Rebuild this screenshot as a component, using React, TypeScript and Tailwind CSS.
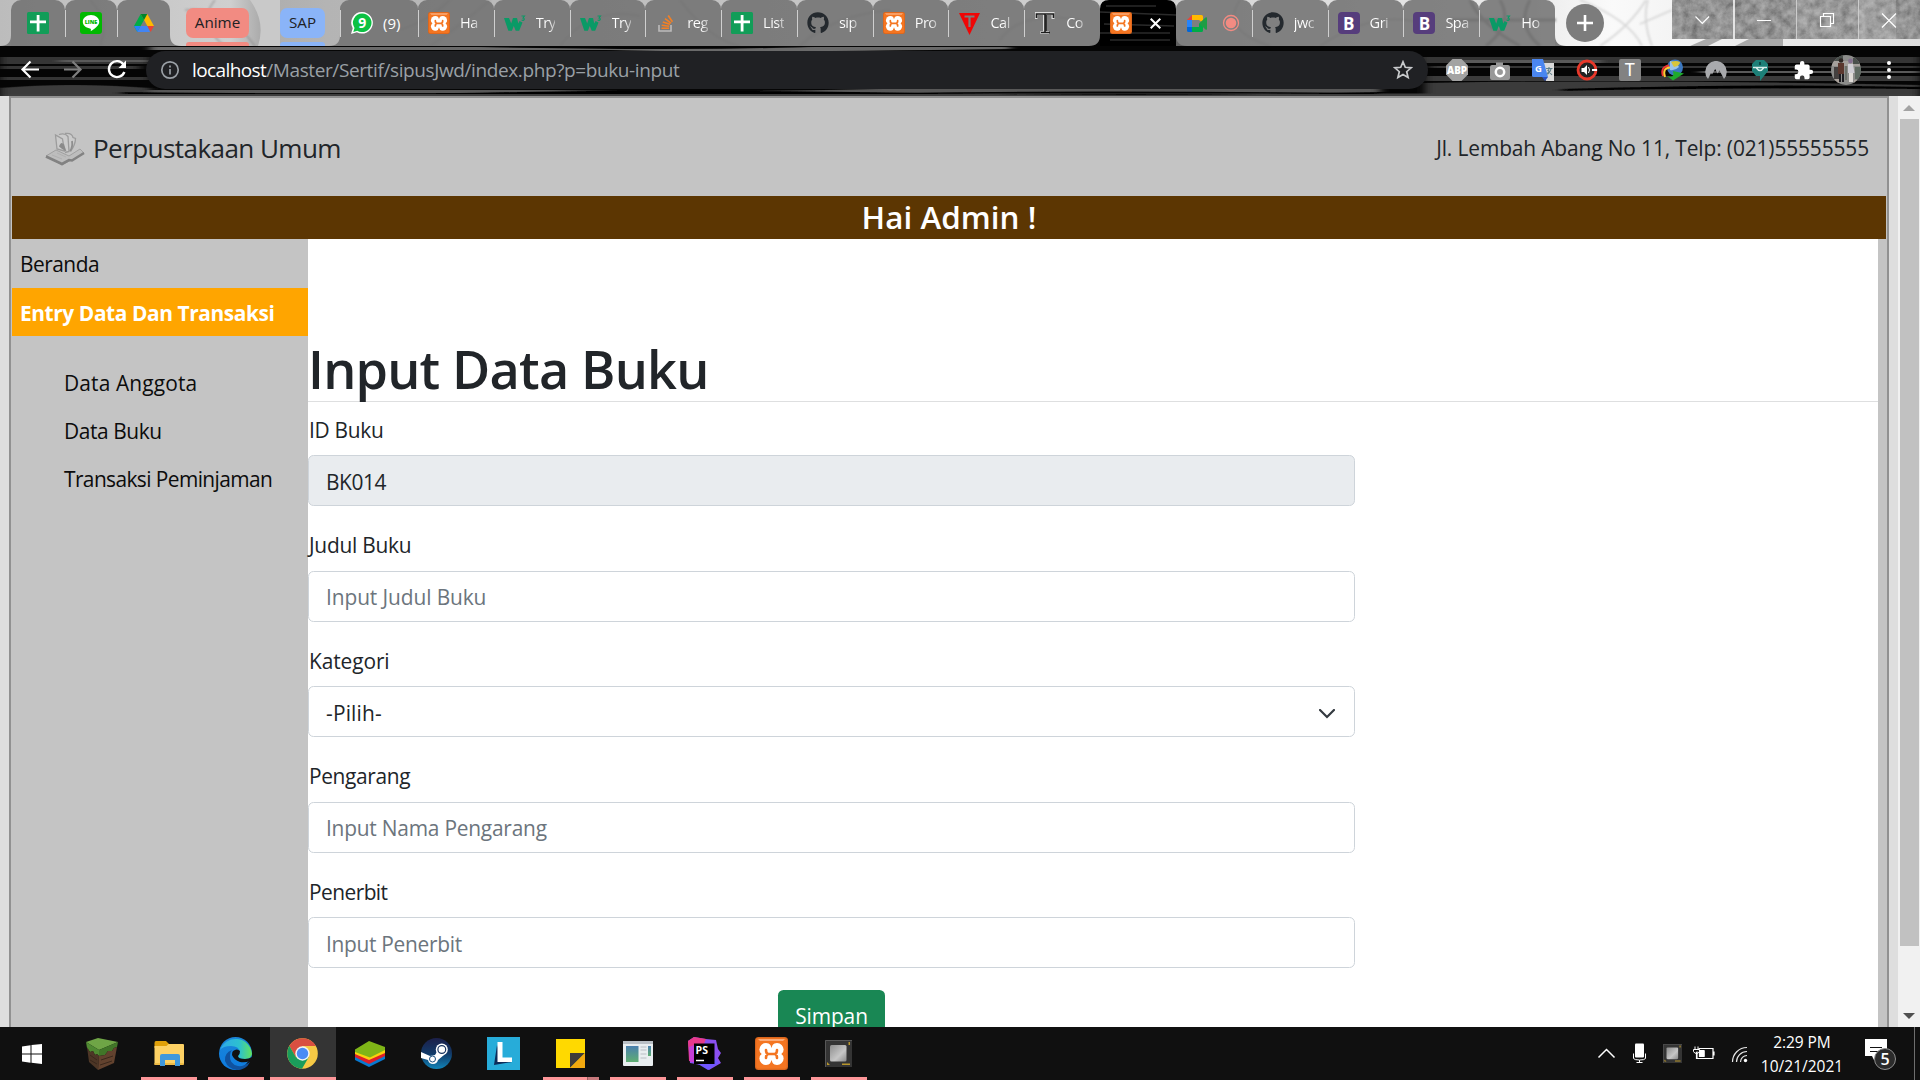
import React from 'react';
import { FaGithub } from 'react-icons/fa';

type P = { s?: number };

const Xampp = ({ s = 22 }: P) => (
  <svg width={s} height={s} viewBox="0 0 33 33">
    <rect width="33" height="33" rx="3.5" fill="#d9651d" />
    <rect x="1.2" y="1.2" width="30.6" height="30.6" rx="2.5" fill="#f47521" />
    <path d="M3 2h27l-2 2H5z" fill="#fbab78" />
    <g fill="#fff">
      <circle cx="11" cy="12.6" r="6.6" />
      <circle cx="22" cy="12.6" r="6.6" />
      <circle cx="11" cy="21.4" r="6.6" />
      <circle cx="22" cy="21.4" r="6.6" />
      <rect x="10" y="11" width="13" height="11" />
    </g>
    <path d="M11 13q0 4 2.500 4M11 21q0-4 2.500-4h6M22 13q0 4-2.500 4M22 21q0-4-2.500-4" fill="none" stroke="#f47521" strokeWidth="2.600" strokeLinecap="round" />
    <path d="M14.500 5h4l-2 6zM14.500 28.500h4l-2-5.500zM3.500 14.500v5l3.300-2.500zM29.500 14.500v5l-3.300-2.500z" fill="#f47521" />
  </svg>
);

const Sheets = () => (
  <svg width="22" height="22" viewBox="0 0 22 22">
    <rect width="22" height="22" rx="1.5" fill="#129d58" />
    <path d="M9.700 3h2.800v5.500H19v2.800h-6.500V19.500H9.700v-8.200H3V8.500h6.700z" fill="#fff" />
  </svg>
);
const Line = () => (
  <svg width="22" height="22" viewBox="0 0 22 22">
    <rect width="22" height="22" rx="3" fill="#00b900" />
    <path d="M11 3c4.700 0 8.200 3 8.200 6.700 0 3-2.700 6-8.600 9.500.6-1.800.4-2.500-.7-2.800C5.600 15.700 2.800 13 2.800 9.700 2.800 6 6.300 3 11 3z" fill="#fff" />
    <text x="11" y="11.800" textAnchor="middle" fontSize="5.500" fontWeight="800" fontFamily="Open Sans, sans-serif" fill="#00b900">LINE</text>
  </svg>
);
const Drive = () => (
  <svg width="20" height="18" viewBox="0 0 20 18">
    <path d="M6.700 0h6.600L20 12h-6.600z" fill="#ffba00" />
    <path d="M6.700 0 0 12l3.300 6L10 6z" fill="#00ac47" />
    <path d="M6.700 0h6.600L10 6z" fill="#00832d" />
    <path d="M6.600 12h6.800L16 18H3.300z" fill="#4285f4" />
    <path d="M13.400 12H20l-3.300 6z" fill="#ea4335" />
    <path d="M0 12h6.600l-3.300 6z" fill="#2684fc" />
  </svg>
);
const WhatsApp = () => (
  <svg width="22" height="22" viewBox="0 0 22 22">
    <path d="M11.200 0a10.800 10.800 0 1 1-5.300 20.300L0 22l1.700-5.800A10.800 10.800 0 0 1 11.200 0z" fill="#fff" />
    <path d="M11.200 1.500a9.300 9.300 0 1 1-4.900 17.200l-4 1.200 1.200-4A9.300 9.300 0 0 1 11.200 1.500z" fill="#0cc143" />
    <text x="11.300" y="16" textAnchor="middle" fontSize="14" fontWeight="700" fontFamily="Open Sans, sans-serif" fill="#fff">9</text>
  </svg>
);
const W3 = () => (
  <svg width="22" height="16" viewBox="0 0 22 16" fill="#0a9a66">
    <path d="M0 3h5l2.200 5.500L9 3h4l1.300 5.500L15.500 6l3 1.500-3.300 8.300h-3.500L9.800 11l-1.900 4.800H4.300z" />
    <path d="M17.500 1h3L19 3q1.600.2 1.200 1.600-.8 1.200-2.600.4" fill="none" stroke="#0a9a66" strokeWidth="1.100" />
  </svg>
);
const Stack = () => (
  <svg width="16" height="18" viewBox="0 0 16 18" fill="none">
    <path d="M1 11v6h12v-6" stroke="#bcbbbb" strokeWidth="1.600" />
    <path d="M3.500 14.300h7.500M3.700 11.300l7.500.9M4.800 8l7.200 2.300M7 4.600l6 4.500M10.200 1.500l4.200 6.300" stroke="#f48024" strokeWidth="1.600" />
  </svg>
);
const Typing = () => (
  <svg width="21" height="23" viewBox="0 0 21 23">
    <path d="M0 1h21L10.500 23z" fill="#f00505" />
    <path d="M5.500 4.500h10M10.500 4.500V15" stroke="#7c7c7c" strokeWidth="2.200" />
  </svg>
);
const SerifT = () => (
  <svg width="20" height="22" viewBox="0 0 20 22">
    <path d="M1 7V1.500h17V7M9.500 2v18.500M5.500 20.500h8.500" fill="none" stroke="#ddd" strokeWidth="3" />
    <path d="M1.500 6V2h17v4M10 2v18.500M6 20.500h9" fill="none" stroke="#1c1c1c" strokeWidth="1.600" />
    <path d="M11 3v16" stroke="#1c1c1c" strokeWidth="1.500" />
  </svg>
);
const Meet = () => (
  <svg width="20" height="17" viewBox="0 0 20 17">
    <path d="M5 0v5H0z" fill="#ea4335" />
    <path d="M5 0h9.500Q16 0 16 1.500V8l-4-3H5z" fill="#ffba00" />
    <path d="M0 5h5v7H0z" fill="#2684fc" />
    <path d="M0 12h5v5H1.500Q0 17 0 15.500z" fill="#0066da" />
    <path d="M5 12h7V9l4-3v9.500q0 1.500-1.500 1.500H5z" fill="#00ac47" />
    <path d="m12 8.500 6.500-6q1.500-.8 1.500.5v11q0 1.300-1.500.5z" fill="#1f9d45" />
  </svg>
);
const Boot = () => (
  <div className="flex h-[22px] w-[22px] items-center justify-center rounded-[4px] bg-[#563d7c] text-[17px] leading-none font-bold text-white">B</div>
);
const Github = () => <FaGithub size={22} color="#24292e" />;

const Sep = () => <i className="absolute top-[10px] left-0 h-[27px] w-px bg-[#cfcfcf]" />;

function Tab({ icon, text, sep = true, children }: { icon: React.ReactNode; text?: string; sep?: boolean; children?: React.ReactNode }) {
  return (
    <div className="relative flex h-[46px] w-[75.8px] items-center rounded-t-[9px] bg-[#707070]/85 pl-[10px]">
      {sep && <Sep />}
      <span className="flex w-[22px] items-center justify-center">{icon}</span>
      {text && (
        <span className="ml-[10px] bg-linear-to-r from-white from-65% to-white/45 bg-clip-text text-[14.5px] tracking-[-0.5px] whitespace-nowrap text-transparent">{text}</span>
      )}
      {children}
    </div>
  );
}

function Flare({ side, color = '#7d7d7d', className }: { side: 'l' | 'r'; color?: string; className: string }) {
  return (
    <svg className={`absolute bottom-0 ${className}`} width="11" height="11" viewBox="0 0 11 11">
      <path d={side === 'l' ? 'M11 0v11H0Q11 11 11 0z' : 'M0 0v11h11Q0 11 0 0z'} fill={color} />
    </svg>
  );
}

function Marble() {
  return (
    <svg className="absolute inset-0" width="1920" height="46" viewBox="0 0 1920 46">
      <defs>
        <linearGradient id="mb" x1="0" x2="1">
          <stop offset="0" stopColor="#bcbcbc" />
          <stop offset=".12" stopColor="#cfcfcf" />
          <stop offset=".135" stopColor="#adadad" />
          <stop offset=".17" stopColor="#b4b4b4" />
          <stop offset=".6" stopColor="#d2d2d2" />
          <stop offset=".8" stopColor="#ececec" />
          <stop offset=".84" stopColor="#fafafa" />
          <stop offset="1" stopColor="#dcdcdc" />
        </linearGradient>
        <filter id="soft"><feGaussianBlur stdDeviation="1.2" /></filter>
        <filter id="grain" x="0" y="0" width="100%" height="100%">
          <feTurbulence type="fractalNoise" baseFrequency=".12" numOctaves="5" seed="4" />
          <feColorMatrix values=".38 0 0 0 .1  .38 0 0 0 .1  .38 0 0 0 .1  0 0 0 0 1" />
        </filter>
      </defs>
      <rect width="1920" height="46" fill="url(#mb)" />
      <g fill="none" stroke="#777" strokeWidth="1.500" opacity=".5" filter="url(#soft)">
        <path d="M90 0q20 20 10 46M185 10q40-5 70 36M215 0q-20 24 10 46M430 46q30-20 60-46M450 0q-20 20-50 30M560 46q30-40 80-30M680 0q30 40 60 46M800 46q30-30 90-36M1000 40q20-30 80-20M1240 0q-20 30 30 46M1320 46q60-40 110-20" />
        <path d="M1580 0q50 20 62 46M1600 46q30-20 46-46M1648 0q-6 20 4 46M1640 24l32-14" stroke="#b5b5b5" strokeWidth="1.800" />
        <path d="M1500 0q14 24-14 46M1470 0q10 24 50 46M1450 20h106M1530 0q-14 26 10 46" stroke="#333" strokeWidth="3" />
      </g>
      <path d="M250 0h30v46h-22q8-24-8-46z" fill="#c9c9c9" />
      <path d="M1690 46l16-7h16l-14 7zM1735 46l14-7h34v7z" fill="#aaa" />
      <rect x="1672" width="248" height="39" filter="url(#grain)" />
      <path d="M1796 0h62v39h-62z" fill="#fff" opacity=".07" />
      <path d="M1858 0h38v39h-38z" fill="#fff" opacity=".14" />
    </svg>
  );
}

function Streaks({ className = '' }: { className?: string }) {
  return (
    <svg className={`absolute inset-0 ${className}`} width="1920" height="50" viewBox="0 0 1920 50">
      <defs>
        <filter id="s1"><feGaussianBlur stdDeviation="5 .7" /></filter>
      </defs>
      <rect width="1920" height="50" fill="#050505" />
      <g filter="url(#s1)">
        <path d="M0 11h150v7H0zM0 20h140v3H0zM0 31h150v3H0zM1420 11h500v6h-500zM1430 20h490v2h-490z" fill="#343434" />
        <path d="M0 42q70 -6 150 0v8H0zM1425 30h495v5h-495zM1425 37q200 -4 495 2v11h-495z" fill="#3a3a3a" />
        <path d="M60 14h90v2H60zM1460 14h140v3h-140zM1700 25h220v2h-220z" fill="#5a5a5a" />
        <path d="M150 1h330q200 4 330 0h200v2q-300 4-400 1H150z" fill="#6a6a6a" />
        <path d="M150 44h400q160 3 330-1h500v4q-300-3-500 0H150z" fill="#585858" />
        <path d="M0 47.500h1920v2.500H0z" fill="#3c3c3c" />
        <path d="M120 46q240 3 400 0t400 1 460-1v2H120z" fill="#000" />
        <path d="M1560 43q200-6 360-2v2q-160-2-360 2z" fill="#000" />
      </g>
    </svg>
  );
}

function TabStrip() {
  return (
    <div className="relative flex h-[46px] overflow-hidden">
      <Marble />
      <div className="relative ml-[11px] flex w-[159px]">
        <Flare side="l" className="left-[-11px]" />
        <div className="flex h-[46px] w-[54px] items-center justify-center rounded-t-[10px] bg-[#707070]/85"><Sheets /></div>
        <div className="relative flex h-[46px] w-[52px] items-center justify-center rounded-t-[10px] bg-[#707070]/85"><Sep /><Line /></div>
        <div className="relative flex h-[46px] w-[53px] items-center justify-center rounded-t-[10px] bg-[#707070]/85"><Sep /><Drive /></div>
        <Flare side="r" className="right-[-11px]" />
      </div>
      <div className="relative ml-4 flex w-[63px] flex-col justify-between pt-2 text-center text-[15.2px] text-[#202124]">
        <div className="h-[30px] rounded-[7px] bg-[#f28b82] leading-[29px]">Anime</div>
        <div className="h-1 rounded-t-[3px] bg-[#f28b82]" />
      </div>
      <div className="relative ml-[31px] flex w-[45px] flex-col justify-between pt-2 text-center text-[15.2px] text-[#202124]">
        <div className="h-[30px] rounded-[7px] bg-[#8ab4f8] leading-[29px]">SAP</div>
        <div className="h-1 rounded-t-[3px] bg-[#8ab4f8]" />
      </div>
      <div className="relative ml-[15px] flex w-[760px]">
        <Flare side="l" className="left-[-11px]" />
        <div className="relative flex h-[46px] w-[78px] items-center rounded-t-[9px] bg-[#707070]/85 pl-[11px] text-[15px] text-white"><Sep /><WhatsApp /><span className="ml-[10px]">(9)</span></div>
        <Tab icon={<Xampp />} text="Ha" />
        <Tab icon={<W3 />} text="Try" />
        <Tab icon={<W3 />} text="Try" />
        <Tab icon={<Stack />} text="reg" />
        <Tab icon={<Sheets />} text="List" />
        <Tab icon={<Github />} text="sip" />
        <Tab icon={<Xampp />} text="Pro" />
        <Tab icon={<Typing />} text="Cal" />
        <Tab icon={<SerifT />} text="Co" />
      </div>
      <div className="relative flex w-[76px] items-center bg-black pl-[10px]">
        <svg className="absolute inset-0" width="76" height="46"><path d="M0 12l76 3M4 24l70 2M0 33h70M10 40h60M6 6h50" stroke="#2a2a2a" strokeWidth="1.500" /></svg>
        <Flare side="l" color="#050505" className="left-[-11px]" />
        <Flare side="r" color="#050505" className="right-[-11px]" />
        <svg className="absolute top-0 left-0" width="76" height="9"><path d="M0 0h9Q0 0 0 9zM76 0h-9q9 0 9 9z" fill="#d0d0d0" /></svg>
        <span className="relative"><Xampp /></span>
        <svg className="relative ml-[18px]" width="11" height="11" viewBox="0 0 11 11"><path d="M.7.700l9.600 9.600M10.300.700.700 10.300" stroke="#fff" strokeWidth="2" /></svg>
      </div>
      <div className="relative flex w-[380px]">
        <Tab icon={<Meet />} sep={false}>
          <svg className="ml-[14px]" width="18" height="18"><circle cx="9" cy="9" r="7.500" fill="none" stroke="#f28b82" strokeWidth="1.300" /><circle cx="9" cy="9" r="5.300" fill="#f28b82" /></svg>
        </Tab>
        <Tab icon={<Github />} text="jwc" />
        <Tab icon={<Boot />} text="Gri" />
        <Tab icon={<Boot />} text="Spa" />
        <Tab icon={<W3 />} text="Ho" />
        <Flare side="r" className="right-[-10px]" />
      </div>
      <svg className="relative mt-1 ml-[10px]" width="38" height="38" viewBox="0 0 38 38"><circle cx="19" cy="19" r="19" fill="#7c7c7c" /><path d="M19 11v16M11 19h16" stroke="#fff" strokeWidth="2.600" /></svg>
      <svg className="relative ml-[68px]" width="248" height="39" viewBox="0 0 248 39" fill="none" stroke="#fff">
        <path d="M62 0v39" strokeWidth="1.500" />
        <path d="M124.500 0v39M186.500 0v39" stroke="#ccc" />
        <path d="M23.500 16.500l6.800 7 6.800-7M85 20.500h14M210 13.500l14 14M224 13.500l-14 14" strokeWidth="1.200" />
        <path d="M148.500 16.500h10v10h-10zM151.500 16v-2.500h10v10H159" strokeWidth="1.200" />
      </svg>
    </div>
  );
}

function Toolbar() {
  return (
    <div className="relative flex h-[50px] items-center pb-[2px]">
      <Streaks />
      <svg className="relative ml-[20px]" width="110" height="22" viewBox="0 0 110 22" fill="none" strokeWidth="2.200">
        <path d="M19 10.500H2.500M10.500 2.500l-8 8 8 8" stroke="#fff" />
        <path d="M44 10.500h16.500M52.500 2.500l8 8-8 8" stroke="#7f7f7f" />
        <path d="M103.500 5.500a8 8 0 1 0 .9 7.500" stroke="#fff" strokeWidth="2.400" />
        <path d="M106 1.500v7.500h-7.500z" fill="#fff" />
      </svg>
      <div className="relative ml-[16px] flex h-[38px] w-[1282px] items-center rounded-full bg-[#202124] pl-[14px] text-[19px]">
        <svg width="20" height="20" viewBox="0 0 20 20" fill="none" stroke="#9aa0a6"><circle cx="10" cy="10" r="8.200" strokeWidth="1.700" /><path d="M10 9v5.500M10 5.500v2" strokeWidth="1.700" /></svg>
        <span className="ml-[12px] tracking-[-0.6px] text-white">localhost</span>
        <span className="tracking-[-0.39px] text-[#9aa0a6]">/Master/Sertif/sipusJwd/index.php?p=buku-input</span>
        <svg className="mr-[15px] ml-auto" width="20" height="20" viewBox="0 0 20 20" fill="none" stroke="#c8cacc" strokeWidth="1.700"><path d="M10 1.800l2.300 5.500 5.900.5-4.500 3.900 1.400 5.800L10 14.400l-5.100 3.100 1.400-5.800-4.500-3.900 5.900-.5z" /></svg>
      </div>
      <div className="relative ml-[7px] flex w-[454px] items-center">
        <Ext><svg width="22" height="22" viewBox="0 0 22 22"><path d="M6.500 0h9L22 6.500v9L15.500 22h-9L0 15.500v-9z" fill="#a3a3a3" /><text x="11" y="14.800" textAnchor="middle" fontSize="10" fontWeight="800" textLength="20" lengthAdjust="spacingAndGlyphs" fontFamily="Open Sans, sans-serif" fill="#fff">ABP</text></svg></Ext>
        <Ext><svg width="20" height="19" viewBox="0 0 20 19"><path d="M2 4h4V1.500h7V4h5q2 0 2 2v11q0 2-2 2H2q-2 0-2-2V6q0-2 2-2z" fill="#999" /><circle cx="10" cy="11" r="4.200" fill="none" stroke="#fff" strokeWidth="2.500" /></svg></Ext>
        <Ext><svg width="22" height="22" viewBox="0 0 22 22"><path d="M9 4h13v18H14z" fill="#dadada" /><path d="M0 0h11l5 18H1.500Q0 18 0 16.500z" fill="#4a86f0" /><path d="M10 18h6l-3 4z" fill="#2a4fc0" /><text x="6.500" y="12.500" textAnchor="middle" fontSize="9.500" fontWeight="700" fontFamily="Open Sans, sans-serif" fill="#fff">G</text><path d="M14 9.500h6.500M17 8v1.500q-.5 4-2 6M15.500 11l4.500 5M19 10q-1 3-3 5" fill="none" stroke="#5f7f8a" strokeWidth="1.100" /></svg></Ext>
        <Ext><svg width="22" height="22" viewBox="0 0 22 22"><circle cx="11" cy="11" r="9" fill="#222" stroke="#e8382a" strokeWidth="2.800" /><path d="M5.500 9h2.500l3-3v10l-3-3H5.500zM16 10h5v2h-5z" fill="#fff" /><path d="M12.500 8q2 3 0 6" stroke="#fff" fill="none" /></svg></Ext>
        <Ext><div className="h-[22px] w-[22px] rounded-[2px] bg-[#828282] text-center font-[Lato] text-[17px] leading-[22px] text-white">T</div></Ext>
        <Ext><svg width="24" height="22" viewBox="0 0 24 22"><circle cx="14" cy="8.500" r="8" fill="#3c78c0" /><path d="M9 2q6 0 9 6-4 4-9 3z" fill="#9ac3e8" /><path d="M10 3q5-2 9 0 0 4-6 5z" fill="#d8c63a" /><path d="M2 17Q-1 8 8 6.500" fill="none" stroke="#e33" strokeWidth="2" /><path d="M4 18Q1 9 9 8.500" fill="none" stroke="#fc3" strokeWidth="2" /><path d="M6 17q8 3 6-5l11 2.500-11 7z" fill="#1faa2c" /></svg></Ext>
        <Ext><svg width="22" height="18" viewBox="0 0 22 18"><path d="M3 18A10.800 10.800 0 1 1 19 18L14.500 9.500l-2 3L10.200 8 7 13.500l-1-1.500z" fill="#a9aaad" /></svg></Ext>
        <Ext><svg width="18" height="21" viewBox="0 0 18 21"><path d="M5 0h8l4 4v7l-4 5-4 5v-5H5l-4-5V4z" fill="#1d8078" /><path d="M2 7.500h14M5.500 8q3.500 5 7 0" stroke="#d8efec" strokeWidth="1.500" fill="none" /><path d="M8 2h2v3H8z" fill="#0c4a46" /></svg></Ext>
        <Ext><svg width="21" height="21" viewBox="0 0 24 24" fill="#fff"><path d="M20.500 11H19V7a2 2 0 0 0-2-2h-4V3.500a2.500 2.500 0 0 0-5 0V5H4a2 2 0 0 0-2 2v3.800h1.500a2.700 2.700 0 0 1 0 5.400H2V20a2 2 0 0 0 2 2h3.800v-1.500a2.700 2.700 0 0 1 5.400 0V22H17a2 2 0 0 0 2-2v-4h1.500a2.500 2.500 0 0 0 0-5z" /></svg></Ext>
        <Ext><svg width="30" height="30" viewBox="0 0 30 30"><defs><clipPath id="av"><circle cx="15" cy="15" r="15" /></clipPath></defs><g clipPath="url(#av)"><rect width="30" height="30" fill="#8c8c8a" /><path d="M0 6h30v5H0z" fill="#a5a09c" /><path d="M0 0h12v6H0zM22 3h8v6h-8z" fill="#4a504c" /><path d="M3 12h5v12H3z" fill="#44403f" /><path d="M7 8h6v11H7z" fill="#5b372e" /><circle cx="10" cy="5.500" r="2.300" fill="#2c2422" /><path d="M8 19h2v8H8zM11 19h2v8h-2z" fill="#1d1c20" /><path d="M17 9h5l1.500 9H17z" fill="#cfcdd4" /><circle cx="19.500" cy="6" r="2.400" fill="#83708e" /><path d="M18 18h4v9h-4z" fill="#e0dcd8" /><path d="M24 12h6v12h-6z" fill="#5f6a62" /><path d="M14 11h2v14h-2z" fill="#6d7069" /><path d="M0 24h8v6H0zM23 25h7v5h-7z" fill="#a9a19a" /></g></svg></Ext>
        <div className="ml-[19px] flex flex-col gap-[3px]"><i className="h-1 w-1 rounded-full bg-white" /><i className="h-1 w-1 rounded-full bg-white" /><i className="h-1 w-1 rounded-full bg-white" /></div>
      </div>
    </div>
  );
}
const Ext = ({ children }: { children: React.ReactNode }) => <span className="flex w-[43.3px] shrink-0 items-center justify-center">{children}</span>;

function BookLogo() {
  return (
    <svg width="40" height="34" viewBox="0 0 40 34" fill="none" stroke="#858585">
      <path d="M1 24l10-6 13 6 11-7 4 4-12 7-3 1-7 4z" fill="#bdbdbd" stroke="#a0a0a0" />
      <path d="M1 24.500l16 7.500 7-4 3 .5L39 21" strokeWidth="2.600" stroke="#828282" />
      <path d="M12 17L10.500 3l7 4 2 12zM14 2.500q6-2 9 2l1 15-4 1M20 1.500q7-1 8 4l2.500 1q0 6-5 13" stroke="#9c9c9c" strokeWidth="1.300" fill="#cbcbcb" />
      <path d="M14 14.500q2-6 5-2l2.500 7-5-3z" fill="#8a8a8a" stroke="none" />
      <path d="M27 9q1 6-2 10" stroke="#8e8e8e" strokeWidth="1.800" />
      <path d="M7 23l10 4M12 21l9 4" stroke="#b0b0b0" />
    </svg>
  );
}

function Field({ label, track, children }: { label: string; track: string; children: React.ReactNode }) {
  return (
    <div className="mb-[23px] w-[1047px]">
      <div className={`mb-[8.5px] h-[33px] pl-px leading-[33px] ${track}`}>{label}</div>
      {children}
    </div>
  );
}
const box = 'flex h-[51px] items-center rounded-[5.5px] border border-[#ced4da] px-[17px] pt-[4px]';

function Page() {
  return (
    <div className="flex h-[931px] overflow-hidden bg-[#dedede] text-[20.9px] text-[#212529]">
      <div className="ml-[9px] flex h-[1100px] w-[1880px] flex-col border-2 border-[#919191] bg-[#c4c4c4] px-px">
        <header className="flex h-[98px] items-center justify-between pr-[17px] pl-[33px]">
          <div className="flex items-center pt-1">
            <BookLogo />
            <span className="ml-[8px] text-[26.1px] tracking-[-0.6px]">Perpustakaan Umum</span>
          </div>
          <span className="pt-[3px] tracking-[-0.12px]">Jl. Lembah Abang No 11, Telp: (021)55555555</span>
        </header>
        <div className="h-[43px] bg-[#5c3602] text-center text-[31.4px] leading-[42px] font-semibold tracking-[0.05px] text-white">Hai Admin !</div>
        <div className="flex flex-1 pr-[8px]">
          <nav className="w-[296px] leading-[48px] text-[#0c0c0c]">
            <div className="mt-px h-[48px] pl-[8px] tracking-[-0.5px]">Beranda</div>
            <div className="h-[48px] bg-[#ffa500] pl-[8px] leading-[50px] font-bold tracking-[-0.41px] text-white">Entry Data Dan Transaksi</div>
            <div className="mt-[23px] pl-[52px]">
              <div className="tracking-[0.15px]">Data Anggota</div>
              <div className="tracking-[-0.4px]">Data Buku</div>
              <div className="tracking-[-0.59px]">Transaksi Peminjaman</div>
            </div>
          </nav>
          <main className="flex-1 bg-white">
            <h1 className="mt-[97px] h-[66px] border-b border-[#dedfe0] text-[52.2px] leading-[66px] font-semibold tracking-[-0.8px]">Input Data Buku</h1>
            <div className="mt-[11.600px]">
              <Field label="ID Buku" track="tracking-[-0.3px]">
                <div className={`${box} bg-[#e9ecef] tracking-[-0.4px]`}>BK014</div>
              </Field>
              <Field label="Judul Buku" track="tracking-[-0.25px]">
                <div className={`${box} tracking-[-0.1px] text-[#6c757d]`}>Input Judul Buku</div>
              </Field>
              <Field label="Kategori" track="tracking-[-0.1px]">
                <div className={`${box} justify-between pr-[16px] tracking-[0.18px]`}>
                  -Pilih-
                  <svg className="mr-[3px]" width="16" height="10" viewBox="0 0 16 10"><path d="M1 1l7 7 7-7" fill="none" stroke="#343a40" strokeWidth="2.200" strokeLinecap="round" /></svg>
                </div>
              </Field>
              <Field label="Pengarang" track="tracking-[-0.35px]">
                <div className={`${box} tracking-[-0.22px] text-[#6c757d]`}>Input Nama Pengarang</div>
              </Field>
              <Field label="Penerbit" track="tracking-[-0.55px]">
                <div className={`${box} tracking-[-0.3px] text-[#6c757d]`}>Input Penerbit</div>
              </Field>
              <div className="mt-[-1px] flex w-[1047px] justify-center">
                <div className="h-[51px] w-[107px] rounded-[5.5px] bg-[#198754] pt-[2px] text-center leading-[49px] tracking-[-0.09px] text-white">Simpan</div>
              </div>
            </div>
          </main>
        </div>
      </div>
      <div className="ml-[9px] flex w-[22px] flex-col items-center bg-[#f1f1f1]">
        <svg className="mt-[9px]" width="12" height="6"><path d="M6 0l6 6H0z" fill="#a3a3a3" /></svg>
        <div className="mt-[8px] h-[827px] w-[19px] bg-[#c1c1c1]" />
        <svg className="mt-auto mb-[8px]" width="12" height="6"><path d="M6 6L0 0h12z" fill="#505050" /></svg>
      </div>
    </div>
  );
}

const Cpu = ({ s = 27 }: P) => (
  <svg width={s} height={s} viewBox="0 0 27 27">
    <defs><linearGradient id="cp" x1="0" y1="0" x2="1" y2="1"><stop stopColor="#8d8d8d" /><stop offset=".6" stopColor="#c6c6c6" /><stop offset="1" stopColor="#8a8a8a" /></linearGradient></defs>
    <rect width="27" height="27" fill="#343434" />
    <path d="M.5 27V.5H27" stroke="#575757" fill="none" />
    <rect x="5" y="5" width="16.500" height="16.500" rx="1.500" fill="url(#cp)" />
    <path d="M2 22v3h3zM17 23.500h8v1.500h-8zM23.500 2h1.500v3h-1.500z" fill="#b7962c" />
  </svg>
);

const apps: { icon: React.ReactNode; run?: boolean; active?: boolean; multi?: boolean }[] = [
  { icon: <svg width="32" height="32" viewBox="0 0 32 32"><path d="M0 4l12-4 20 4-19 8z" fill="#6fa546" /><path d="M0 4l13 8v6l-2-2-2 1-2-4-3 1-3-4z" fill="#4f8a32" /><path d="M13 12l19-8-1 5-3 1-2 3-4 0-3 4-6 1z" fill="#417628" /><path d="M1 9l3 5 3-1 2 4 2-1 2 2-1 14L3 24z" fill="#4d3626" /><path d="M13 18l6-1 3-4 4 0 2-3 3-1-3 16-16 7z" fill="#62422e" /><path d="M15 22l12-4M14 27l12-4M4 17l7 5M4 22l7 4" stroke="#3a281c" /></svg> },
  { icon: <svg width="30" height="26" viewBox="0 0 30 26"><path d="M.5 2Q.5 0 2 0h10l3 3v4H.5z" fill="#e0a009" /><path d="M.5 5h12l2-2H29q1 0 1 1v18q0 2-1 2H1.500q-1 0-1-1z" fill="#fdd164" /><path d="M.5 22h29v2H.5z" fill="#eebb45" /><path d="M6 25V15q0-2 2-2h16q2 0 2 2v10h-5v-6h-10v6z" fill="#3f98dc" /></svg>, run: true },
  { icon: <svg width="33" height="33" viewBox="0 0 33 33"><defs><linearGradient id="e1" x1="0" x2="1"><stop stopColor="#2fa8e8" /><stop offset=".6" stopColor="#2cc0d0" /><stop offset="1" stopColor="#62e35c" /></linearGradient><linearGradient id="e2" x1="0" y1="0" x2="0" y2="1"><stop stopColor="#1b86d8" /><stop offset="1" stopColor="#0d7be0" /></linearGradient></defs><circle cx="16.500" cy="16.500" r="16.500" fill="url(#e2)" /><path d="M22 33L33 20v13z" fill="#101010" /><path d="M1 13A16.500 16.500 0 0 1 33 17q-1 5-7 5-7 0-7-3 2-2 2-4-1-6-9-6-8 0-11 4z" fill="url(#e1)" /><path d="M11 18q-1 9 8 11 5 1 12-4-4 8-13 8-9-1-12-9-1-8 7-11-2 2-2 5z" fill="#10529f" /><path d="M14 14q4-3 7 0 0 3-2 5 0 3 7 3 4 0 7-2l-2 4q-5 2-10 1-6-2-8-7 0-3 1-4z" fill="#111" /></svg>, run: true },
  { icon: <svg width="31" height="31" viewBox="0 0 31 31"><circle cx="15.500" cy="15.500" r="15.300" fill="#f6c945" /><path d="M2.300 7.800A15.300 15.300 0 0 1 28.800 8H15.500l-6.600 11.300z" fill="#d94f41" /><path d="M2.300 7.800A15.300 15.300 0 0 0 15 30.800l6.700-11.500H8.900z" fill="#1a9c5b" /><circle cx="15.500" cy="15.500" r="7.200" fill="#f3f3f3" /><circle cx="15.500" cy="15.500" r="5.700" fill="#4a8bf5" /></svg>, run: true, active: true },
  { icon: <svg width="30" height="26" viewBox="0 0 30 26"><path d="M0 15v4l14 7 16-8v-4l-16 7z" fill="#0879d0" /><path d="M0 12v4l14 7 16-8v-4l-16 7z" fill="#de1e2a" /><path d="M0 9v4l14 6 16-7V8l-16 7z" fill="#fbd10d" /><path d="M0 8.500L14 0l16 6v3l-15 7.500L0 11z" fill="#7fb517" /></svg> },
  { icon: <svg width="31" height="31" viewBox="0 0 31 31"><defs><linearGradient id="st" x1="0" y1="0" x2="0" y2="1"><stop stopColor="#1c1f49" /><stop offset=".5" stopColor="#123a68" /><stop offset="1" stopColor="#1184b8" /></linearGradient></defs><circle cx="15.500" cy="15.500" r="15.500" fill="url(#st)" /><path d="M0 14l9 4 5-1 3-5 6 5-6 5q-1 4-5 4-4 0-5-4l-7-2z" fill="#fff" /><circle cx="20.800" cy="11.500" r="6" fill="#fff" /><circle cx="20.800" cy="11.500" r="3.900" fill="#fff" stroke="#1a3560" strokeWidth="1.200" /><circle cx="11.500" cy="21" r="3" fill="none" stroke="#1a4f80" /></svg> },
  { icon: <svg width="33" height="33" viewBox="0 0 33 33"><rect width="33" height="33" fill="#27acd9" /><path d="M10 8L7 28l18-3-10-2z" fill="#0d2d5a" /><path d="M10.500 5h5v15.500H25V25H10.500z" fill="#fff" /></svg> },
  { icon: <svg width="29" height="29" viewBox="0 0 29 29"><path d="M0 0h29v15L15 29H0z" fill="#ffd900" /><path d="M14 14h15L14 29z" fill="#3f3c3a" /><path d="M29 14v15H14z" fill="#f2a90f" /></svg>, run: true, multi: true },
  { icon: <svg width="30" height="25" viewBox="0 0 30 25"><defs><linearGradient id="wn" x1="0" y1="0" x2="0" y2="1"><stop stopColor="#4a7fae" /><stop offset="1" stopColor="#5fae72" /></linearGradient></defs><rect width="30" height="25" rx="1" fill="#e9eef0" /><path d="M0 0h30v3H0z" fill="#b9bfc5" /><rect x="3" y="5" width="12.500" height="16" fill="url(#wn)" /><path d="M17.500 6h6M17.500 9h6M17.500 13h6M17.500 17h6" stroke="#c9ced2" strokeWidth="1.500" /><rect x="25" y="5" width="3" height="10" fill="url(#wn)" /></svg>, run: true },
  { icon: <svg width="33" height="33" viewBox="0 0 33 33"><path d="M0 4L6 0l12 2 10 1 2 9 3 4-3 5 3 5-12 7-8-5-11-2z" fill="#8a4ff0" /><path d="M0 4L6 0l12 2-3 7H5L4 24l-3 0z" fill="#e83a8c" /><path d="M1 10l5-2v17H2z" fill="#c53fd8" /><path d="M10 27l10 6 11-7-5-6z" fill="#7057ff" /><rect x="6" y="6.500" width="20.500" height="20.500" fill="#000" /><text x="7.600" y="16.500" fontSize="10.500" fontWeight="700" fontFamily="Open Sans, sans-serif" fill="#fff">PS</text><path d="M8 23.500h8" stroke="#fff" strokeWidth="1.500" /></svg>, run: true },
  { icon: <Xampp s={33} />, run: true },
  { icon: <Cpu />, run: true },
];

function Taskbar() {
  return (
    <div className="flex h-[53px] bg-[#101010] text-white">
      <div className="flex w-[68.500px] items-center pl-[22px]">
        <svg width="20" height="20" viewBox="0 0 20 20" fill="#fff"><path d="M0 2.500l8.500-1.200v8.200H0zM9.500 1.100L20 0v9.500H9.500zM0 10.500h8.500v8.200L0 17.500zM9.500 10.500H20V20L9.500 18.800z" /></svg>
      </div>
      {apps.map((a, i) => (
        <div key={i} className={`relative mr-px flex w-[66px] items-center justify-center ${a.active ? 'bg-[#343434]' : ''}`}>
          {a.icon}
          {a.run && <div className={`absolute bottom-0 flex h-[3px] bg-[#fd9699] ${a.active ? 'w-[66px]' : 'w-[56px]'}`}>{a.multi && <i className="ml-auto w-[12px] border-l border-[#9c5e60] bg-[#c87a7d]" />}</div>}
        </div>
      ))}
      <div className="ml-auto flex items-center">
        <svg width="160" height="32" viewBox="0 1 160 32" fill="none" stroke="#fff">
          <path d="M8.500 20.500l8-8 8 8" strokeWidth="1.500" />
          <rect x="45" y="6.500" width="9" height="14" rx="1" fill="#fff" stroke="none" />
          <path d="M43.500 16.500v5q1 1.500 6 1.500t6-1.500v-5M49.500 23v2.500M46.500 25.500h6" />
          <path d="M108.500 11.500h14.500v10h-16v-7M124 14.500v4M109.500 13.500h4.500v6h-4.500zM106.500 15v7" strokeWidth="1.200" />
          <path d="M110 14h4v5.500h-4z" fill="#fff" />
          <path d="M103.500 12.500h6v2q-1 2-3 2t-3-2zM105 12.500v-3M108 12.500v-3" />
          <path d="M142.500 25A14.500 14.500 0 0 1 157 10.500M146.500 25A10.500 10.500 0 0 1 157 14.500M150.500 25a6.500 6.500 0 0 1 6.500-6.500" strokeWidth="1.200" opacity=".9" />
          <circle cx="155.500" cy="23.500" r="1.700" fill="#fff" stroke="none" />
          <svg x="73" y="7" width="19" height="19" stroke="none"><Cpu s={19} /></svg>
        </svg>
        <div className="ml-[11px] w-[82px] text-center text-[15.500px] leading-[24px] whitespace-nowrap"><div className="tracking-[-0.1px]">2:29 PM</div><div className="flex justify-center">10/21/2021</div></div>
        <svg className="ml-[21px]" width="34" height="34" viewBox="0 0 34 34">
          <path d="M1 2h22v17h-9l-4 4-2-4H1z" fill="#fff" />
          <path d="M6 10.500h12M6 14.500h8" stroke="#111" />
          <circle cx="21" cy="22" r="10.500" fill="#2b2b2b" stroke="#8f8f8f" />
          <text x="21" y="28" textAnchor="middle" fontSize="16" fontWeight="600" fontFamily="Open Sans, sans-serif" fill="#fff">5</text>
        </svg>
        <i className="mr-[5px] ml-[16px] h-[53px] w-px bg-[#6e6e6e]" />
      </div>
    </div>
  );
}

export default function App() {
  return (
    <div className="h-[1080px] w-[1920px] overflow-hidden bg-black font-['Open_Sans',sans-serif]">
      <TabStrip />
      <Toolbar />
      <Page />
      <Taskbar />
    </div>
  );
}
